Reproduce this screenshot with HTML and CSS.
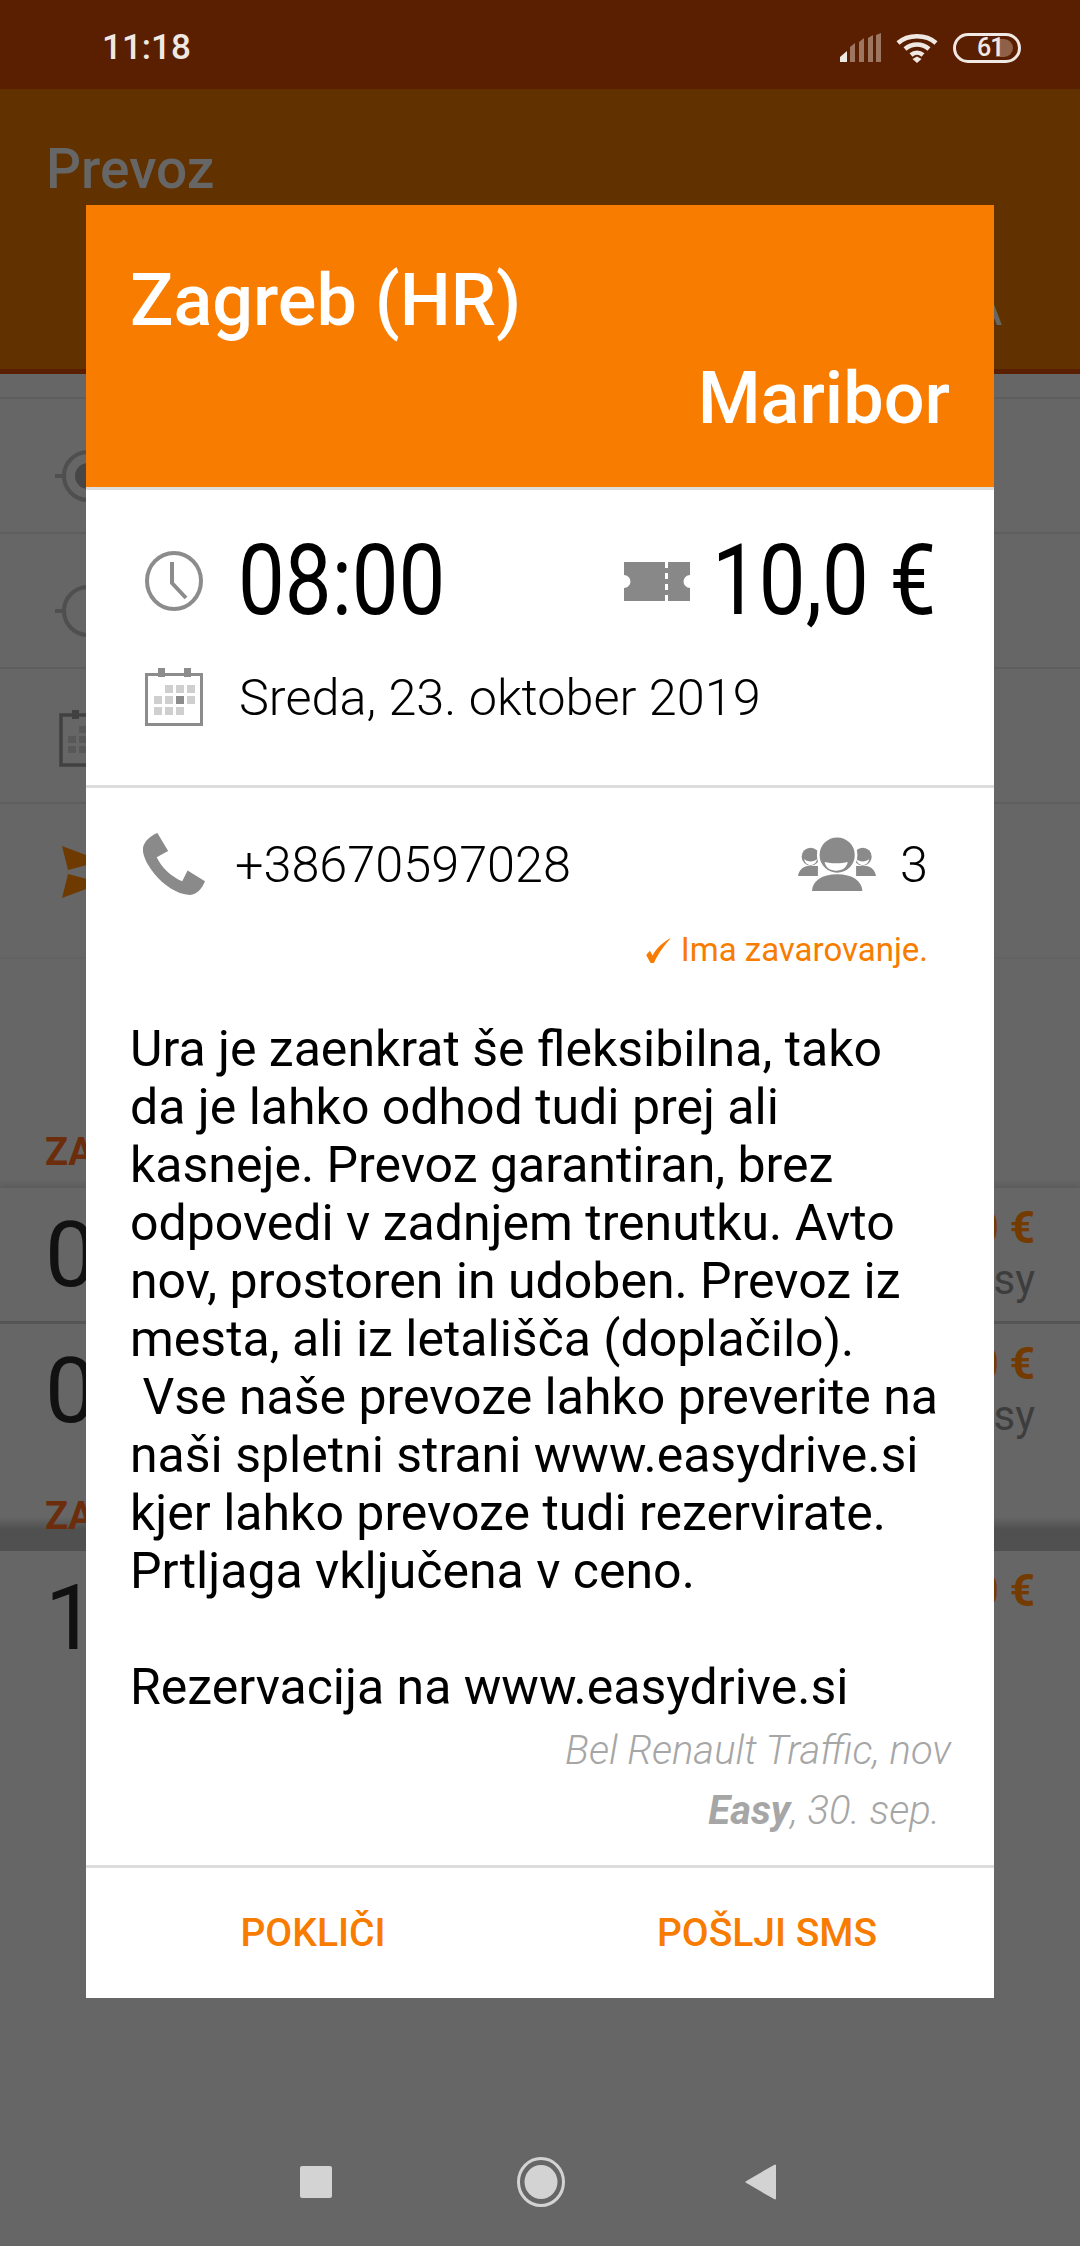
FILE: index.html
```html
<!DOCTYPE html>
<html>
<head>
    <title>Prevoz</title>
    <link rel="stylesheet" href="styles.css">
</head>
<body>
    <div class="status-bar">
        <span class="clock">11:18</span>
        <div class="status-icons">
            <svg width="41" height="30" viewBox="0 0 41 30">
                <path d="M0 29v-5l7-6v11z" fill="#f0e8e3"/>
                <path d="M10 29V14l5-4v19zM19 29V9l5-4v24zM28 29V5l5-3v27zM36 29V2l5-2v29z" fill="#9c7660"/>
            </svg>
            <svg width="42" height="30" viewBox="0 0 42 30">
                <path d="M2 10C12 1 30 1 40 10M9 16c7-6 17-6 24 0M15 22c3.500-3 8.500-3 12 0" fill="none" stroke="#f0e8e3" stroke-width="4.500"/>
                <path d="M21 30l-4.500-4 4.500-2.500 4.500 2.500z" fill="#f0e8e3"/>
            </svg>
            <div class="battery"><div class="battery-fill"></div><span>61</span></div>
        </div>
    </div>

    <div class="app-bar">
        <div class="app-title">Prevoz</div>
        <div class="app-tab">PREVOZA</div>
    </div>

    <div class="search-form">
        <div class="form-row">
            <svg class="ring-icon" width="60" height="52" viewBox="0 0 60 52">
                <circle cx="33" cy="26" r="24" fill="none" stroke="#4f4f4f" stroke-width="4"/>
                <circle cx="33" cy="26" r="13" fill="#464646"/>
                <path d="M0 26h9" stroke="#4f4f4f" stroke-width="4"/>
            </svg>
        </div>
        <div class="form-row">
            <svg class="ring-icon" width="60" height="52" viewBox="0 0 60 52">
                <circle cx="33" cy="26" r="24" fill="none" stroke="#4f4f4f" stroke-width="4"/>
                <path d="M0 26h9" stroke="#4f4f4f" stroke-width="4"/>
            </svg>
        </div>
        <div class="form-row">
            <svg class="date-icon" width="56" height="58" viewBox="0 0 56 58">
                <path d="M2 6h52v50H2z" fill="none" stroke="#414141" stroke-width="3.500"/>
                <path d="M13 1h7v9h-7z" fill="#414141"/>
                <path d="M20 17h8v7h-8zM9 27h8v7H9zM20 27h8v7h-8zM9 37h8v7H9zM20 37h8v7h-8z" fill="#585858"/>
            </svg>
        </div>
        <div class="form-row form-row-last">
            <svg class="plane-icon" width="40" height="52" viewBox="0 0 40 52">
                <path d="M0 0l40 15-34 9zM0 52l40-15-34-9z" fill="#6f3a00"/>
            </svg>
        </div>
    </div>

    <div class="list-section">
        <div class="list-title">ZAGREB</div>
        <div class="list-row list-row-first">
            <span class="list-time">08:00</span>
            <div class="list-right"><div class="list-price">10,0 €</div><div class="list-name">Easy</div></div>
        </div>
        <div class="list-row list-row-second">
            <span class="list-time">08:00</span>
            <div class="list-right"><div class="list-price">10,0 €</div><div class="list-name">Easy</div></div>
        </div>
        <div class="list-title list-title-second">ZAGREB</div>
        <div class="list-row list-row-last">
            <span class="list-time">14:00</span>
            <div class="list-right"><div class="list-price">10,0 €</div></div>
        </div>
    </div>

    <div class="nav-bar">
        <div class="nav-square"></div>
        <svg class="nav-home" width="48" height="50" viewBox="0 0 48 50">
            <ellipse cx="24" cy="25" rx="22.500" ry="23.500" fill="none" stroke="#d3d3d3" stroke-width="3"/>
            <ellipse cx="24" cy="25" rx="16.500" ry="17" fill="#d3d3d3"/>
        </svg>
        <svg width="32" height="36" viewBox="0 0 32 36">
            <path d="M30 1.500v33L1.500 18z" fill="#d3d3d3" stroke="#d3d3d3" stroke-width="2" stroke-linejoin="round"/>
        </svg>
    </div>

    <div class="dialog">
        <div class="dialog-head">
            <div class="head-from">Zagreb (HR)</div>
            <div class="head-to">Maribor</div>
        </div>

        <div class="info-block">
            <div class="time-row">
                <svg class="icon" width="58" height="60" viewBox="0 0 58 60">
                    <ellipse cx="29" cy="30" rx="27" ry="28" fill="none" stroke="#8c8c8c" stroke-width="4"/>
                    <path d="M27 11v21l14 15" fill="none" stroke="#8c8c8c" stroke-width="4"/>
                </svg>
                <span class="big-text big-time">08:00</span>
                <svg class="ticket-icon" width="66" height="39" viewBox="0 0 66 39">
                    <path d="M0 0h66v13a6.500 6.500 0 0 0 0 13v13H0V26a6.500 6.500 0 0 0 0-13z" fill="#888"/>
                    <path d="M41 0h3v6h-3zM41 11h3v6h-3zM41 22h3v6h-3zM41 33h3v6h-3z" fill="#fff"/>
                </svg>
                <span class="big-text big-price">10,0 €</span>
            </div>
            <div class="date-row">
                <svg class="icon" width="58" height="58" viewBox="0 0 58 58">
                    <path d="M1.500 6.500h55v50h-55z" fill="none" stroke="#8c8c8c" stroke-width="3"/>
                    <path d="M13 0h7v9h-7zM39 0h7v9h-7z" fill="#8c8c8c"/>
                    <path d="M20 17h8v8h-8zM31 17h8v8h-8zM42 17h8v8h-8zM9 28h8v8H9zM20 28h8v8h-8zM42 28h8v8h-8zM9 39h8v8H9zM20 39h8v8h-8zM31 39h8v8h-8z" fill="#cfcfcf"/>
                    <path d="M31 28h8v8h-8z" fill="#8c8c8c"/>
                </svg>
                <span class="date-text">Sreda, 23. oktober 2019</span>
            </div>
        </div>

        <div class="contact-row">
            <svg class="phone-icon" width="62" height="62" viewBox="25 22 185 185">
                <path d="M68 22L100 76L66 94C80 125 110 152 142 166L158 134L210 166C200 190 185 205 165 207C125 205 85 175 60 145C35 115 22 85 25 65C30 45 48 30 68 22Z" fill="#8a8a8a"/>
            </svg>
            <span class="phone-text">+38670597028</span>
            <svg class="people-icon" width="78" height="54" viewBox="30 38 235 162">
                <circle cx="68" cy="97" r="27" fill="#8a8a8a"/>
                <circle cx="225" cy="97" r="27" fill="#8a8a8a"/>
                <path d="M30 155c3-18 15-28 30-30h30v30zM265 155c-3-18-15-28-30-30h-30v30z" fill="#8a8a8a"/>
                <path d="M48 104c10 10 30 10 40 0-4 14-12 18-20 18s-16-4-20-18zM245 104c-10 10-30 10-40 0 4 14 12 18 20 18s16-4 20-18z" fill="#fff"/>
                <circle cx="148" cy="92" r="57" fill="#8a8a8a" stroke="#fff" stroke-width="8"/>
                <path d="M72 200c2-30 30-50 76-50s74 20 76 50z" fill="#8a8a8a"/>
                <path d="M110 113c20 5 50 5 70 0-4 18-16 26-35 26s-31-8-35-26z" fill="#fff"/>
            </svg>
            <span class="phone-text people-count">3</span>
        </div>
        <div class="insurance">
            <svg class="check-icon" width="25" height="25" viewBox="45 38 73 74">
                <path d="M45 88L56 76L64 90C75 68 95 50 118 38C100 58 80 85 68 112L58 112Z" fill="#f77c00"/>
            </svg>
            <span>Ima zavarovanje.</span>
        </div>

        <div class="notes">Ura je zaenkrat še fleksibilna, tako
da je lahko odhod tudi prej ali
kasneje. Prevoz garantiran, brez
odpovedi v zadnjem trenutku. Avto
nov, prostoren in udoben. Prevoz iz
mesta, ali iz letališča (doplačilo).
&nbsp;Vse naše prevoze lahko preverite na
naši spletni strani www.easydrive.si
kjer lahko prevoze tudi rezervirate.
Prtljaga vključena v ceno.

Rezervacija na www.easydrive.si</div>

        <div class="car-line">Bel Renault Traffic, nov</div>
        <div class="author-line"><b>Easy</b>, 30. sep.</div>

        <div class="dialog-buttons">
            <span>POKLIČI</span>
            <span>POŠLJI SMS</span>
        </div>
    </div>
</body>
</html>
```

FILE: styles.css
```css
body {
    margin: 0;
    width: 1080px;
    height: 2246px;
    position: relative;
    overflow: hidden;
    background-color: #666;
    font-family: Roboto, "Liberation Sans", sans-serif;
}
.status-bar {
    height: 83px;
    background-color: #5a1f00;
    color: #f0e8e3;
    display: flex;
    align-items: center;
    justify-content: space-between;
    padding: 6px 59px 0 102px;
}
.clock {
    font-size: 35px;
    font-weight: 500;
}
.status-icons {
    display: flex;
    align-items: center;
    gap: 15px;
}
.battery {
    width: 62px;
    height: 24px;
    border: 3px solid #f0e8e3;
    border-radius: 15px;
    position: relative;
    overflow: hidden;
}
.battery-fill {
    position: absolute;
    left: 40px;
    top: 3px;
    bottom: 3px;
    width: 17px;
    background-color: #8f6048;
    border-radius: 0 9px 9px 0;
}
.battery span {
    position: absolute;
    left: 21px;
    top: -2px;
    font-size: 25px;
    font-weight: 500;
    line-height: 28px;
    letter-spacing: -1px;
}
.app-bar {
    height: 285px;
    box-sizing: border-box;
    background-color: #613100;
    border-bottom: 5px solid #5a1f00;
    padding: 48px 78px 0 46px;
}
.app-title {
    font-size: 55px;
    font-weight: 500;
    color: #666;
}
.app-tab {
    margin-top: 88px;
    text-align: right;
    font-size: 39px;
    font-weight: 500;
    color: #666;
}
.search-form {
    padding-top: 23px;
}
.form-row {
    height: 133px;
    border-top: 2px solid #5e5e5e;
    padding-left: 55px;
    display: flex;
    align-items: center;
}
.ring-icon {
    margin-top: 20px;
}
.date-icon {
    margin: 4px 0 0 4px;
}
.plane-icon {
    margin: -18px 0 0 7px;
}
.form-row-last {
    height: 153px;
    border-bottom: 2px solid #626262;
}
.list-section {
    padding-top: 171px;
}
.list-title {
    padding-left: 45px;
    font-size: 38px;
    font-weight: 700;
    line-height: 44px;
    height: 57px;
    color: #6b2d0c;
}
.list-title-second {
    background: linear-gradient(#666 0, #666 40%, #505050 62%);
}
.list-row {
    height: 133px;
    padding: 0 45px;
    display: flex;
    justify-content: space-between;
    border-top: 1px solid #5c5c5c;
}
.list-row-first {
    box-shadow: 0 -4px 5px rgba(0,0,0,0.08);
}
.list-row-second {
    border-top: 3px solid #555;
    height: 170px;
}
.list-row-last {
    border-top: none;
}
.list-time {
    font-size: 91px;
    line-height: 134px;
    color: #111;
}
.list-right {
    text-align: right;
}
.list-price {
    margin-top: 15px;
    font-size: 44px;
    font-weight: 700;
    line-height: 50px;
    color: #733b00;
}
.list-name {
    font-size: 42px;
    line-height: 50px;
    margin-top: 2px;
    color: #3d3d3d;
}
.nav-bar {
    position: absolute;
    left: 300px;
    top: 2157px;
    display: flex;
    align-items: center;
}
.nav-square {
    width: 32px;
    height: 32px;
    margin-right: 185px;
    background-color: #d3d3d3;
    border-radius: 2px;
}
.nav-home {
    margin-right: 180px;
}

/* dialog on top of the dimmed page */
.dialog {
    position: absolute;
    left: 86px;
    top: 205px;
    width: 908px;
    height: 1793px;
    background-color: white;
    color: black;
}
.dialog-head {
    height: 235px;
    padding: 47px 44px 0 44px;
    background-color: #f77c00;
    border-bottom: 3px solid #ddd;
    color: white;
    font-size: 72px;
    font-weight: 500;
    line-height: 98px;
}
.head-to {
    text-align: right;
}
.info-block {
    height: 298px;
    padding: 41px 60px 0 59px;
    border-bottom: 3px solid #ddd;
    box-sizing: border-box;
}
.time-row {
    display: flex;
    align-items: center;
    height: 100px;
}
.icon {
    flex-shrink: 0;
}
/* the app font is narrower than Roboto at this height */
.big-text {
    display: inline-block;
    font-size: 98px;
    line-height: 100px;
    white-space: nowrap;
    transform: scaleX(0.85);
    transform-origin: left center;
}
.big-time {
    width: 204px;
    margin-left: 35px;
}
.big-price {
    width: 222px;
    margin-left: 22px;
}
.ticket-icon {
    margin-left: auto;
}
.date-row {
    display: flex;
    align-items: center;
    height: 60px;
    margin-top: 36px;
}
.date-text {
    margin-left: 36px;
    font-size: 50.4px;
    font-weight: 300;
    white-space: nowrap;
}
.contact-row {
    display: flex;
    align-items: center;
    height: 64px;
    margin-top: 44px;
    padding: 0 66px 0 57px;
}
.phone-text {
    margin-left: 30px;
    font-size: 50.4px;
    font-weight: 300;
}
.people-icon {
    margin-left: auto;
}
.people-count {
    margin-left: 24px;
}
.insurance {
    display: flex;
    justify-content: flex-end;
    align-items: center;
    gap: 10px;
    height: 40px;
    margin-top: 34px;
    padding-right: 66px;
    color: #f77c00;
    font-size: 33px;
    line-height: 40px;
}
.notes {
    margin-top: 50px;
    padding-left: 44px;
    font-size: 50px;
    line-height: 58px;
    white-space: pre-line;
}
.car-line, .author-line {
    font-size: 40px;
    font-style: italic;
    font-weight: 300;
    line-height: 60px;
    text-align: right;
    color: #a6a6a6;
}
.car-line {
    margin-top: 5px;
    padding-right: 43px;
}
.author-line {
    padding-right: 54px;
}
.author-line b {
    font-weight: 700;
}
.dialog-buttons {
    margin-top: 24px;
    height: 130px;
    border-top: 3px solid #ddd;
    display: grid;
    grid-template-columns: 1fr 1fr;
    align-items: center;
    justify-items: center;
    color: #f77c00;
    font-size: 39px;
    font-weight: 500;
}
```
